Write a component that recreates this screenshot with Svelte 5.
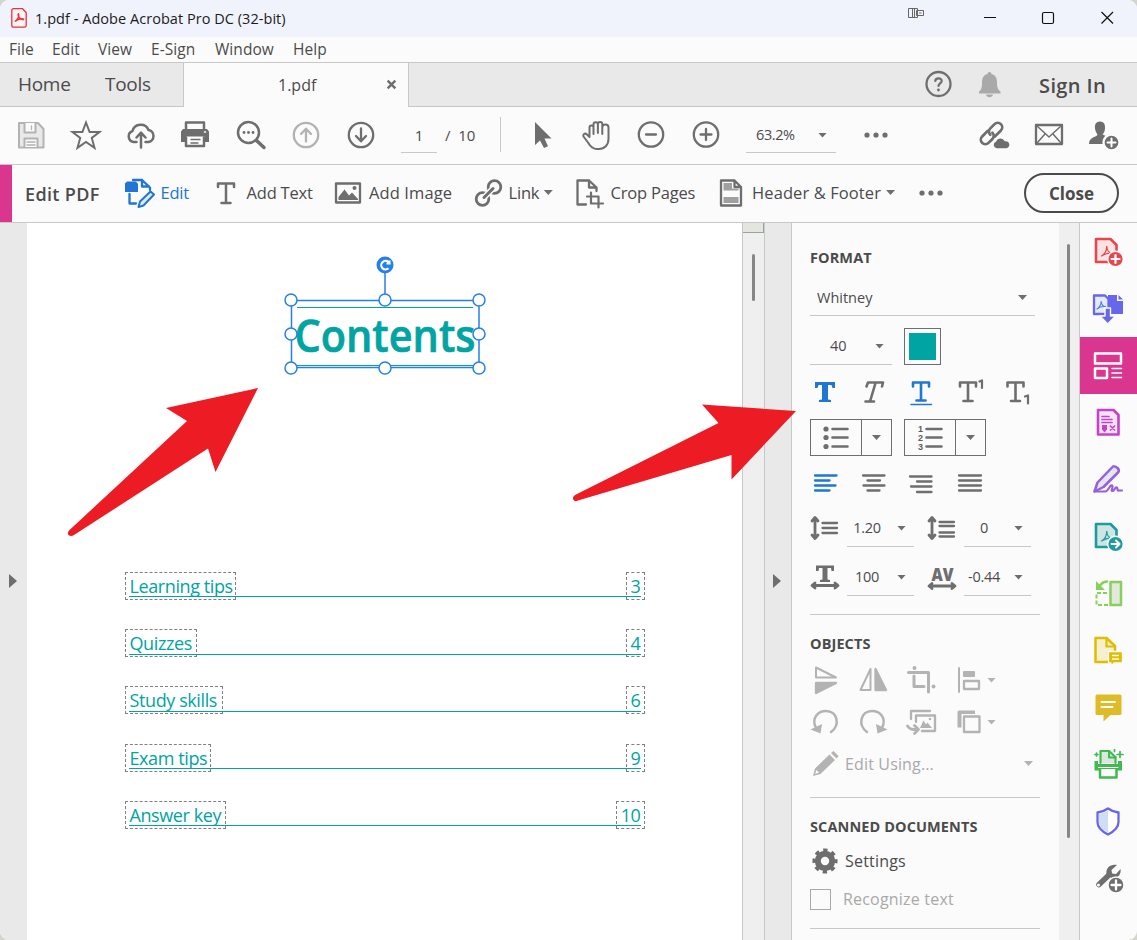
<script>
    const menus = ['File', 'Edit', 'View', 'E-Sign', 'Window', 'Help'];

    const contents = [
        { title: 'Learning tips', page: 3, width: 111 },
        { title: 'Quizzes', page: 4, width: 72 },
        { title: 'Study skills', page: 6, width: 98 },
        { title: 'Exam tips', page: 9, width: 86 },
        { title: 'Answer key', page: 10, width: 101 }
    ];

    const tools = [
        { icon: 'edit', label: 'Edit', active: true },
        { icon: 'addText', label: 'Add Text' },
        { icon: 'image', label: 'Add Image' },
        { icon: 'link', label: 'Link', menu: true },
        { icon: 'cropPage', label: 'Crop Pages' },
        { icon: 'header', label: 'Header & Footer', menu: true },
        { icon: 'dots' }
    ];

    const rail = [
        'create', 'combine', 'editPdf', 'forms', 'sign', 'exportPdf',
        'organize', 'send', 'comment', 'scan', 'protect', 'more'
    ];

    // All icons are drawn on a 32x32 grid, stroked with currentColor
    const pdfMark = '<path stroke-width="1.300" d="M9.500 20c3-1.500 5-5 5.300-9.500c.2 4 2.500 6.800 5.700 6.700c-4-.6-7.500.5-11 2.800z"/>';

    const icons = {
        save: '<g stroke-width="2"><path fill="#e9e9e9" d="M4 4H23L28.500 10V28.500H4Z"/><path fill="#fbfbfb" d="M9.500 4V13.500H20.500V4M9.500 28V19.500H22.500V28"/><path d="M16.500 7V10.500M12 23H20M12 26H20" stroke-width="1.300"/></g>',
        star: '<path stroke-width="2" stroke-linejoin="miter" d="M16 3.500L19.600 13H29.500L21.800 19L24.500 28.800L16 23L7.500 28.800L10.200 19L2.500 13H12.400Z"/>',
        cloud: '<path stroke-width="2.500" d="M11.500 23H8.500A5.700 5.700 0 0 1 7.500 12A8.500 8.500 0 0 1 23.500 11A6.100 6.100 0 0 1 23.500 23H20.500M16 28.500V14M11.500 18.500L16 13.700L20.500 18.500"/>',
        print: '<g transform="translate(-2 -.5)"><path stroke-width="2.500" d="M8 12V4H26V12"/><path fill="currentColor" stroke="none" d="M5 10.500H29L31 13V23.500H27V18H8V23.500H3V13Z"/><path stroke-width="2.500" d="M8 19V27.500H26V19" fill="#fff"/><path stroke-width="1.300" d="M13 21H22M13 24.500H20"/><path stroke="#fff" stroke-width="1.500" d="M26.500 13.500H27.500"/></g>',
        find: '<circle cx="13.500" cy="13.500" r="10.500" stroke-width="2.500"/><path stroke-width="3.500" d="M21.500 21.500L29 28.500"/><g fill="currentColor" stroke="none"><circle cx="9" cy="13.500" r="1.400"/><circle cx="13.500" cy="13.500" r="1.400"/><circle cx="18" cy="13.500" r="1.400"/></g>',
        up: '<circle cx="16" cy="16" r="12.200"/><path d="M16 22.500V10M11 15L16 9.700L21 15"/>',
        down: '<circle cx="16" cy="16" r="12.200"/><path d="M16 9.500V22M11 17L16 22.300L21 17"/>',
        pointer: '<path fill="currentColor" stroke="none" d="M9 3V26L14 21.500L18 29L22 27.200L18.500 19.500H25.500Z"/>',
        hand: '<path stroke-width="2" d="M8.500 18V8.500a2 2 0 0 1 4 0V15V5.500a2.200 2.200 0 0 1 4.400 0V14V5.200a2.200 2.200 0 0 1 4.400 0V15V8.500a3 3 0 0 1 6.200 0V20c0 6-4 10-9.500 10h-2c-4 0-7-3-9-6.500L2.500 17.500c-1-2.200 1.500-3.700 3.200-2.200L8.500 18"/>',
        minus: '<circle cx="15" cy="15.500" r="12.200"/><path d="M10 15.500H20"/>',
        plus: '<circle cx="15" cy="15.500" r="12.200"/><path d="M9.500 15.500H20.500M15 10V21"/>',
        dots: '<g fill="currentColor" stroke="none"><circle cx="7" cy="16" r="2.600"/><circle cx="16" cy="16" r="2.600"/><circle cx="25" cy="16" r="2.600"/></g>',
        share: '<g transform="rotate(-45 13 15)" stroke-width="2.700"><path d="M13 10.500H5A4.500 4.500 0 0 0 5 19.500H10.500A4.500 4.500 0 0 0 15 15M14 19.500H22.500A4.500 4.500 0 0 0 22.500 10.500H16.500A4.500 4.500 0 0 0 12 15"/></g><path fill="currentColor" stroke="#fbfbfb" stroke-width="1.500" d="M18.500 30A4.200 4.200 0 0 1 17.500 22A5.200 5.200 0 0 1 27 21.500A4.300 4.300 0 0 1 28.500 30Z"/>',
        mail: '<path d="M3 6H29V25H3Z"/><path stroke-width="1.500" d="M4 7L16 18L28 7M4 24L12 15M28 24L20 15"/>',
        addUser: '<g fill="currentColor" stroke="none"><path d="M12 2.500C8 2.500 6.500 5.500 7 9.500C7.300 12 8.500 14 9.500 15.500C9 18.500 1 17.500 1 25H17L19 17.500L14.500 15.500C16 14 16.800 12 17 9.500C17.300 5.500 16 2.500 12 2.500Z"/><circle cx="23.500" cy="23.500" r="8" stroke="#fbfbfb"/></g><path stroke="#fff" stroke-width="2" d="M19.500 23.500H27.500M23.500 19.500V27.500"/>',
        help: '<circle cx="15.500" cy="15" r="12" stroke-width="2.300"/><path d="M12.300 12C12.500 8.300 18.800 8.500 18.700 12C18.500 14.500 15.500 14.300 15.500 17" stroke-width="2.200"/><circle cx="15.500" cy="21" r="1.400" fill="currentColor" stroke="none"/>',
        bell: '<path fill="currentColor" stroke="none" d="M15.500 3C16.800 3 17.500 4 17.500 5C21.500 6 23 9 23 13.500C23 19.500 24.500 21 26.500 22.500V24.500H5V22.500C7 21 8 19.500 8 13.500C8 9 9.500 6 13.500 5C13.500 4 14.200 3 15.500 3ZM12 25.500H19C18.500 29 12.500 29 12 25.500Z"/>',
        edit: '<g stroke-width="2.300"><path d="M5.500 17V26.500H12M9 3H18L26 10.500V13M18 3V9.500H25"/><path fill="currentColor" stroke="none" d="M1 6.500L3 4.500H12L14 7V15H1Z"/><path stroke-width="2" fill="#dce9f7" d="M14.500 30L16 24.500L26.500 14.500L30 17.500L19.500 28.500Z"/></g>',
        addText: '<g stroke-width="2.500"><path d="M8 10V6.500H24V10M16 7V26M11.500 26H20.500"/></g>',
        image: '<path d="M4 6.500H28V25.500H4Z"/><path fill="currentColor" stroke="none" d="M6.500 23V20L12.500 12.500L17 18.500L20 15.500L26 22V23Z"/><circle cx="22.500" cy="11" r="2" fill="currentColor" stroke="none"/>',
        link: '<circle cx="22.500" cy="10" r="6.300" stroke-width="2.800"/><circle cx="10.500" cy="22" r="6.300" stroke-width="2.800"/><path stroke="#fbfbfb" stroke-width="6" d="M13.500 19L19.500 13"/><path stroke-width="3" d="M12 20.500L21 11.500"/>',
        cropPage: '<path d="M12 27.500H3.500V3.500H15L22.500 10.500V14M15 3.500V10.500H22.500"/><path stroke-width="2.200" d="M13 19.500H24.500V30.500M17 15.500V26.500H29"/>',
        header: '<path d="M6 3.500H19.500L26 10V28.500H6Z M19.500 3.500V10H26"/><path fill="#a0a0a0" stroke="none" d="M8.500 6H17V11.500H23.500V13.500H8.500ZM8.500 20H23.500V26H8.500Z"/>',
        bold: '<path fill="currentColor" stroke="none" d="M6 6H26V12H23.500L22.500 9H19V23.500L22 24V26H10V24L13 23.500V9H9.500L8.500 12H6Z"/>',
        italic: '<path d="M8.500 10.500L10 6.500H25L24 10.500M17.500 7L12 25.500M7.500 25.500H16" stroke-width="2.600"/>',
        underline: '<path stroke-width="2.600" d="M7 10.500V6.500H23V10.500M15 7V24.500M10.500 24.500H19.500"/><path stroke-width="1.500" d="M5 28.500H25.500"/>',
        superscript: '<path stroke-width="2.600" d="M5 10.500V6.500H21V10.500M13 7V25M8.500 25H17.500"/><path stroke-width="2.200" d="M24.500 5.500L27 4.500V12"/>',
        subscript: '<path stroke-width="2.600" d="M4.500 10.500V6.500H20.500V10.500M12.500 7V25M8 25H17"/><path stroke-width="2.200" d="M22 20.500L25 19.500V27.500"/>',
        bullets: '<g fill="currentColor" stroke="none"><circle cx="6" cy="7" r="2.600"/><circle cx="6" cy="15.500" r="2.600"/><circle cx="6" cy="24.500" r="2.600"/></g><path stroke-width="2.600" d="M12.500 7H27.500M12.500 15.500H27.500M12.500 24.500H27.500"/>',
        alignLeft: '<path d="M6 7.500H27.500M6 12.500H20.500M6 17.500H26.500M6 22.500H20.500"/>',
        alignCenter: '<path d="M6 7.500H27.500M10.500 12.500H23M6.500 17.500H27.500M10.500 22.500H22.500"/>',
        alignRight: '<path d="M5 8.500H26.500M12 13.500H26.500M6 18.500H26.500M12 24H26.500"/>',
        justify: '<path d="M6 7.500H28M6 12.500H28M6 17.500H28M6 22.500H28"/>',
        lineSpacing: '<path stroke-width="2.800" d="M7 6V24M4 8L7 4.500L10 8M4 22L7 25.500L10 22"/><path d="M14.500 10H29M14.500 15H29M14.500 20H29"/>',
        paraSpacing: '<path stroke-width="2.800" d="M7 6V24M4 8L7 4.500L10 8M4 22L7 25.500L10 22"/><path d="M14.500 9H29M14.500 13H29M14.500 19.500H29M14.500 23.500H29"/>',
        scaleText: '<path fill="currentColor" stroke="none" d="M8 3.500H26V9H23.500L23 6H19.500V17.500L22 18V20H12V18L14.500 17.500V6H11L10.500 9H8Z"/><path stroke-width="2.800" d="M5 23.500H29M7 21L4 23.500L7 26M27 21L30 23.500L27 26"/>',
        flipV: '<path stroke-width="2" d="M7 3.500V13.500H27Z"/><path fill="currentColor" d="M7 19H27L7 29Z"/>',
        flipH: '<path stroke-width="2" d="M13.500 5V26H3.500Z"/><path fill="currentColor" d="M18.500 5V26H29Z"/>',
        crop: '<path stroke-width="3" d="M3.500 8.500H23.500V28M9 12V22.500H19"/><circle cx="9.500" cy="4" r="2" fill="currentColor" stroke="none"/><circle cx="28.500" cy="22.500" r="2" fill="currentColor" stroke="none"/>',
        arrange: '<path stroke-width="2" d="M6 4V28"/><path stroke-width="2" fill="currentColor" d="M11 8H21V12H11Z"/><path d="M11 17H26V25H11Z"/>',
        rotateL: '<path stroke-width="2.500" d="M7 22C2 12 9 5 17 5C28.500 5 31.500 19 22 26"/><path fill="currentColor" stroke="none" d="M1.500 23.500L13 18L11.500 27.500Z"/>',
        rotateR: '<path stroke-width="2.500" d="M25 22C30 12 23 5 15 5C3.500 5 .5 19 10 26"/><path fill="currentColor" stroke="none" d="M30.500 23.500L19 18L20.500 27.500Z"/>',
        replace: '<path d="M6 13V5H25M11 9.500H30V25H17M11 9.500V16"/><path stroke-width="2.800" d="M2.500 20C5 23.500 7 23.500 12 23.500M9.500 19.500L13.500 23.500L9.500 27.500"/><path fill="currentColor" stroke="none" d="M15 22L18.500 14.500L21 18.500L22.500 16.500L27 22Z"/><circle cx="25" cy="13" r="1.300" fill="currentColor" stroke="none"/>',
        layers: '<path fill="currentColor" stroke="none" d="M4.500 6Q4.500 4.500 6 4.500H22V8H8.500V21.500H4.500Z"/><path d="M11 10.500H26.500V26H11Z"/>',
        pencil: '<path fill="currentColor" stroke="none" d="M4 28L6 20.500L20.500 6.500L26 12L11.500 26ZM22 5L24.500 3L29.500 8L27.500 10.500Z"/><path fill="#fbfbfb" stroke="none" d="M6 26L7.500 22L10 24.500Z"/>',
        gear: '<circle cx="16" cy="16" r="7.200" stroke-width="6"/><circle cx="16" cy="16" r="10.800" stroke-width="3.500" stroke-linecap="butt" stroke-dasharray="4.300 4.182" stroke-dashoffset="2.150"/>',
        create: `<path fill="#fbe3e1" stroke-width="2.600" d="M4 3H18.500L24.500 9V26H4Z"/>${pdfMark}<circle cx="23.500" cy="23" r="7.800" fill="currentColor" stroke="#fbfbfb" stroke-width="1.400"/><path stroke="#fff" stroke-width="2.200" d="M19.500 23H27.500M23.500 19V27"/>`,
        combine: '<path fill="#e6e9fb" d="M2 3.500H13L16.500 7V22H2Z"/><path stroke-width="1.200" stroke="#4a86d8" d="M5 17C8 15 9 12 9.200 9.500C9.500 12 11 14.500 13.500 14.500C10 14 7.500 15 5 17Z"/><path fill="currentColor" stroke="none" d="M16 3H25V9H31V22H16Z M26.500 3L31 7.500H26.500Z"/><path fill="currentColor" stroke="#fbfbfb" stroke-width="1.400" d="M13 16H18.500V24H23.500L15.700 32L8 24H13Z"/>',
        editPdf: '<path stroke-width="2.500" d="M3 4.500H29V14.500H3ZM3 19.500H15V29H3Z"/><path stroke-width="1.600" d="M20 19.500H29.500M20 24H29.500M20 28.500H29.500"/>',
        forms: '<path fill="#f5e4f5" stroke-width="2.600" d="M6 4H21.500L26.500 9V28.500H6Z"/><path stroke-width="1.700" d="M10 10.500H17M10 13.500H20M10 16.500H20M18.500 20L22.500 24M22.500 20L18.500 24"/><path fill="currentColor" stroke="none" d="M10 19H15V23.500L12.500 26.500L10 23.500Z"/>',
        sign: '<path fill="#e2e6f5" stroke-width="2.500" d="M2.500 28.500L5.500 19.500L20 4.500Q22 2 25.500 5Q28 7.500 26 9.500L11.500 24Z"/><path stroke-width="2.200" d="M2.500 28.500H13C17 28 18 21 20 22.500C22 24 18 28 20.500 28C23 28 22.500 23.500 25 24.500C26 26 25 28 27 27.500L30 27.500"/>',
        exportPdf: `<path fill="#cfe5e3" stroke-width="2.600" d="M4 3H18.500L24.500 9V26H4Z"/>${pdfMark}<circle cx="23.500" cy="23" r="7.800" fill="currentColor" stroke="#fbfbfb" stroke-width="1.400"/><path stroke="#fff" stroke-width="2" d="M19.500 23H27M24 19.500L27.500 23L24 26.500"/>`,
        organize: '<path fill="#e2e8dc" stroke-width="2.500" d="M18.500 5H29V28H18.500Z"/><path stroke-width="2" stroke-linecap="butt" stroke-dasharray="4 2" d="M15 16H4.500V28H16.500"/><path d="M15 4.500C11 5 10 6 7 9.500" stroke-width="2.500"/><path fill="currentColor" stroke="none" d="M4 4V13H13Z"/>',
        send: '<path fill="#f8efce" stroke-width="2.500" d="M3.500 4H14.500L23 12V28H3.500Z"/><path stroke-width="2.200" d="M14.500 4V12.500H23"/><path fill="currentColor" stroke="#fbfbfb" stroke-width="1.300" d="M16.500 17.500H30.500V29H22L19 32.500V29H16.500Z"/><path stroke="#fff" stroke-width="1.300" d="M20.500 21.500H26.500M20.500 25H26.500"/>',
        comment: '<path fill="#dfbb27" stroke="none" d="M5 3.500H28Q29.500 3.500 29.500 5V22.500Q29.500 24 28 24H18.500L11.500 30.500V24H5Q3.500 24 3.500 22.500V5Q3.500 3.500 5 3.500Z"/><path stroke="#fff" stroke-width="2" d="M9.500 11H23M9.500 16H20.500"/>',
        scan: '<path stroke-width="2.200" fill="#d9e8dc" d="M8.500 15V3H17L23.500 9V15"/><path stroke-width="2" d="M17 3V9.500H23.500"/><path fill="currentColor" stroke="none" d="M2.500 13H6V16H26V13H30V22.500H2.500Z"/><path stroke="#fbfbfb" stroke-width="1.200" d="M6.500 19.500H26"/><path fill="#fbfbfb" stroke-width="2.500" stroke-linecap="butt" d="M8 21V29.500H24.500V21"/><path stroke-width="1.700" d="M28 3.500V9.500M25 6.500H31M4.500 5V8M3 6.500H6M22.500 1.500V3.500"/>',
        protect: '<path fill="#fff" stroke-width="2.300" d="M16 3.500C20 6.500 23 7 26.500 7.500V17C26.500 23 21 27 16 29.500C11 27 5.500 23 5.500 17V7.500C9 7 12 6.500 16 3.500Z"/><path fill="#cfddf5" stroke="none" d="M16 5.500V27.500C11 25 7 22 7 17V9C10 8.500 12.500 8 16 5.500Z"/>',
        more: '<path stroke-width="5.500" d="M7 22.500L17.500 12.500"/><path fill="currentColor" stroke="none" d="M25 3L19.500 8L20 11.500L24 12L28.500 7C29.500 12 26 17 20 16.500L14.500 12C13.500 5.500 19 1.500 25 3Z"/><circle cx="6.500" cy="23" r="1.500" fill="#fbfbfb" stroke="none"/><circle cx="24" cy="23" r="8" fill="currentColor" stroke="#fbfbfb" stroke-width="1.500"/><path stroke="#fff" d="M19.500 23H28.500M24 18.500V27.500"/>'
    };
</script>

{#snippet icon(name, tone = '')}
    <svg class="icon {tone}" viewBox="0 0 32 32" aria-hidden="true">{@html icons[name]}</svg>
{/snippet}

{#snippet select(value, kind = '')}
    <div class="select {kind}">
        <span>{value}</span>
        <i class="caret"></i>
    </div>
{/snippet}

<div class="window">
    <header class="titlebar">
        <svg class="logo" viewBox="0 0 16 20">
            <path d="M2.500 .7H11.500L15.200 4.500V17.500Q15.200 19.200 13.500 19.200H2.500Q.8 19.200 .8 17.500V2.500Q.8 .7 2.500 .7Z" fill="#fff3f3" stroke="#e8323c" stroke-width="1.300" />
            <path d="M4 13.500C7 11 8.200 8.500 7.600 6C7 5 6.500 7.500 8.500 9.800C10 11.500 13 12.300 12.500 11C11 10 6.500 11.200 4 13.500Z" fill="none" stroke="#e8323c" stroke-width="1.400" />
        </svg>
        <span class="title">1.pdf - Adobe Acrobat Pro DC (32-bit)</span>
        <svg class="display" viewBox="0 0 16 10">
            <path d="M.5 .5H9.500V9.500H.5ZM8.500 2.500H15.500V7.500H8.500Z" />
            <path d="M4.500 1V9M6.500 1V9M11 5H13.500" />
        </svg>
        <svg class="controls" viewBox="0 0 130 14">
            <path d="M0 6.500H12M117.500 1L129 12.500M129 1L117.500 12.500" />
            <rect x="58.500" y="1.500" width="11" height="11" rx="1.500" />
        </svg>
    </header>

    <nav class="menubar">
        {#each menus as menu}
            <span>{menu}</span>
        {/each}
    </nav>

    <div class="tabs">
        <div class="tab-group">
            <span>Home</span>
            <span>Tools</span>
        </div>
        <div class="tab">
            <span>1.pdf</span>
            <svg viewBox="0 0 10 10"><path d="M1.500 1.500L8.500 8.500M8.500 1.500L1.500 8.500" /></svg>
        </div>
        <div class="tab-rest">
            {@render icon('help')}
            {@render icon('bell', 'pale')}
            <span>Sign In</span>
        </div>
    </div>

    <div class="toolbar">
        <div class="cells">
            {@render icon('save', 'muted')}
            {@render icon('star')}
            {@render icon('cloud')}
            {@render icon('print')}
            {@render icon('find')}
            {@render icon('up', 'muted')}
            {@render icon('down')}
        </div>
        <div class="page-input">1</div>
        <span class="page-count">/&nbsp; 10</span>
        <div class="divider"></div>
        <div class="cells">
            {@render icon('pointer')}
            {@render icon('hand')}
            {@render icon('minus')}
            {@render icon('plus')}
        </div>
        {@render select('63.2%', 'zoom')}
        <div class="overflow">{@render icon('dots')}</div>
        <div class="cells share">
            {@render icon('share')}
            {@render icon('mail')}
            {@render icon('addUser')}
        </div>
    </div>

    <div class="editbar">
        <div class="stripe"></div>
        <strong>Edit PDF</strong>
        <div class="tools">
            {#each tools as tool}
                <div class="tool" class:active={tool.active}>
                    {@render icon(tool.icon)}
                    {#if tool.label}<span>{tool.label}</span>{/if}
                    {#if tool.menu}<i class="caret"></i>{/if}
                </div>
            {/each}
        </div>
        <button>Close</button>
    </div>

    <main>
        <div class="gutter"><i class="expand"></i></div>

        <section class="page">
            <svg class="heading" viewBox="0 0 210 130">
                <path class="rule" d="M20 56.500H196M20 114.500H196" />
                <text x="17.500" y="100.500" textLength="181" lengthAdjust="spacingAndGlyphs">Contents</text>
                <path class="frame" d="M108 22V49M14.500 49.500H202V116.500H14.500Z" />
                {#each [[14, 49], [108, 49], [202, 49], [14, 83], [202, 83], [14, 117], [108, 117], [202, 117]] as [cx, cy]}
                    <circle {cx} {cy} r="6" />
                {/each}
                <circle class="rotate" cx="108" cy="14" r="8.500" />
                <path class="turn" d="M111.500 11A4.300 4.300 0 1 0 111.500 17.300M112.500 9.500V12.500H109.500" />
            </svg>

            <div class="toc">
                {#each contents as row}
                    <div class="entry">
                        <span class="box" style="width: {row.width}px">{row.title}</span>
                        <span class="box number">{row.page}</span>
                    </div>
                {/each}
            </div>
        </section>

        <div class="scroll"><div class="split"></div><div class="thumb"></div></div>
        <div class="gutter right"><i class="expand"></i></div>

        <aside class="panel">
            <h2>FORMAT</h2>
            {@render select('Whitney', 'font')}
            <div class="row size-row">
                {@render select('40', 'size')}
                <div class="swatch"><div></div></div>
            </div>
            <div class="row styles">
                {@render icon('bold', 'blue')}
                {@render icon('italic')}
                {@render icon('underline', 'blue')}
                {@render icon('superscript')}
                {@render icon('subscript')}
            </div>
            <div class="row lists">
                <div class="split-button">
                    <div>{@render icon('bullets')}</div>
                    <div><i class="caret"></i></div>
                </div>
                <div class="split-button">
                    <div>
                        <svg class="icon" viewBox="0 0 32 32">
                            <path stroke-width="2.600" d="M12.500 7H27.500M12.500 15.500H27.500M12.500 24.500H27.500" />
                            <text x="4" y="9.500">1</text>
                            <text x="4" y="18.500">2</text>
                            <text x="4" y="27.500">3</text>
                        </svg>
                    </div>
                    <div><i class="caret"></i></div>
                </div>
            </div>
            <div class="row aligns">
                {@render icon('alignLeft', 'blue')}
                {@render icon('alignCenter')}
                {@render icon('alignRight')}
                {@render icon('justify')}
            </div>
            <div class="row metrics">
                {@render icon('lineSpacing')}
                {@render select('1.20', 'metric')}
                {@render icon('paraSpacing')}
                {@render select('0', 'metric')}
            </div>
            <div class="row metrics lower">
                {@render icon('scaleText')}
                {@render select('100', 'metric')}
                <svg class="icon" viewBox="0 0 32 32">
                    <text class="kern" x="6.500" y="19" textLength="22" lengthAdjust="spacingAndGlyphs">AV</text>
                    <path stroke-width="2.800" d="M5 24H29M7 21.500L4 24L7 26.500M27 21.500L30 24L27 26.500" />
                </svg>
                {@render select('-0.44', 'metric')}
            </div>
            <hr />

            <h2 class="sub">OBJECTS</h2>
            <div class="row objects">
                {@render icon('flipV')}
                {@render icon('flipH')}
                {@render icon('crop')}
                {@render icon('arrange')}
                <i class="caret"></i>
            </div>
            <div class="row objects">
                {@render icon('rotateL')}
                {@render icon('rotateR')}
                {@render icon('replace')}
                {@render icon('layers')}
                <i class="caret"></i>
            </div>
            <div class="row using">
                {@render icon('pencil')}
                <span>Edit Using...</span>
                <i class="caret"></i>
            </div>
            <hr class="second" />

            <h2 class="sub">SCANNED DOCUMENTS</h2>
            <div class="row settings">
                {@render icon('gear')}
                <span>Settings</span>
            </div>
            <div class="row recognize">
                <div class="checkbox"></div>
                <span>Recognize text</span>
            </div>
            <hr class="third" />
        </aside>

        <div class="panel-scroll"><div></div></div>

        <nav class="rail">
            {#each rail as name}
                <div class="rail-item {name}">{@render icon(name)}</div>
            {/each}
        </nav>
    </main>

    <svg class="arrows" viewBox="0 0 1137 940">
        <path d="M258 388L166 408L187 421L69 530.500Q67 533 68.500 535Q71 537 74 535L208 448.500L215.500 472Z" />
        <path d="M796 411L702 404.500L718.500 423L575 495Q572 497 573.500 500Q575 502 578 500.500L731.500 455V479.500Z" />
    </svg>
</div>

<style>
    :global(body) {
        background: #d5d5cf;
    }

    .window {
        position: relative;
        width: 1137px;
        height: 940px;
        overflow: hidden;
        border-radius: 9px;
        background: #fbfbfb;
        color: #4b4b4b;
        font-family: "Open Sans", "Noto Sans", sans-serif;
        font-size: 16px;
        line-height: 20px;
    }

    .window * {
        box-sizing: border-box;
    }

    .icon {
        flex: none;
        width: 32px;
        height: 32px;
        overflow: visible;
        fill: none;
        stroke: currentColor;
        stroke-width: 2.3;
        stroke-linecap: round;
        stroke-linejoin: round;
        color: #6e6e6e;
    }

    .icon.muted,
    .objects .icon,
    .using .icon {
        color: #b3b3b3;
    }

    .icon.pale {
        color: #a9a9a9;
    }

    .icon.blue {
        color: #2076d2;
    }

    .icon text {
        fill: #5e5e5e;
        stroke: none;
        font-family: "Liberation Sans", sans-serif;
        font-size: 9px;
        font-weight: 700;
    }

    .icon text.kern {
        fill: #6e6e6e;
        font-family: "Open Sans", sans-serif;
        font-size: 17px;
        font-weight: 800;
    }

    .caret {
        flex: none;
        width: 9px;
        height: 5px;
        background: #6e6e6e;
        clip-path: polygon(0 0, 100% 0, 50% 100%);
    }

    .titlebar {
        display: flex;
        align-items: flex-start;
        height: 37px;
        padding-left: 11px;
        background: #f0f3fb;
        color: #1c1c1c;
    }

    .logo {
        width: 16px;
        height: 20px;
        margin-top: 8px;
    }

    .title {
        width: 873px;
        margin: 9px 0 0 8px;
        font-size: 14.5px;
        letter-spacing: 0.04px;
    }

    .display {
        width: 16px;
        height: 10px;
        margin-top: 8px;
        fill: none;
        stroke: #666;
        stroke-width: 1;
    }

    .controls {
        width: 130px;
        height: 14px;
        margin: 11px 0 0 60px;
        fill: none;
        stroke: #111;
        stroke-width: 1.2;
    }

    .menubar {
        display: grid;
        grid-template-columns: 43px 46px 53px 64px 78px 60px;
        align-items: center;
        height: 26px;
        padding: 0 0 2px 9px;
        border-bottom: 1px solid #c8c8c8;
        font-size: 15.5px;
        letter-spacing: 0.05px;
    }

    .tabs {
        display: flex;
        height: 44px;
    }

    .tab-group,
    .tab-rest {
        display: flex;
        align-items: center;
        border-bottom: 1px solid #c8c8c8;
        background: #e9e9e9;
        font-size: 19px;
    }

    .tab-group {
        width: 184px;
        padding: 0 0 2px 18px;
        border-right: 1px solid #c8c8c8;
        letter-spacing: -0.3px;
    }

    .tab-group span {
        flex: none;
        width: 87px;
    }

    .tab-group span + span {
        width: 60px;
    }

    .tab {
        display: flex;
        align-items: center;
        width: 224px;
        padding: 0 0 1px 94px;
        font-size: 16px;
    }

    .tab span {
        width: 108px;
    }

    .tab svg {
        width: 11px;
        height: 11px;
        stroke: #6e6e6e;
        stroke-width: 2.2;
    }

    .tab-rest {
        flex: 1;
        padding-left: 514px;
        border-left: 1px solid #c8c8c8;
    }

    .tab-rest .icon + .icon {
        margin-left: 19px;
    }

    .tab-rest span {
        margin: 2px 0 0 33px;
        font-size: 20px;
        font-weight: 600;
        letter-spacing: 0.4px;
    }

    .toolbar {
        display: flex;
        align-items: center;
        height: 58px;
        padding: 0 0 2px 3px;
        border-bottom: 1px solid #c8c8c8;
        font-size: 15px;
    }

    .cells {
        display: grid;
        grid-auto-flow: column;
        grid-auto-columns: 55px;
        justify-items: center;
    }

    .page-input {
        width: 36px;
        height: 37px;
        margin-left: 13px;
        padding-top: 9px;
        border-bottom: 1px solid #c8c8c8;
        text-align: center;
    }

    .page-count {
        width: 55px;
        margin-left: 8px;
    }

    .divider {
        width: 1px;
        height: 35px;
        margin-right: 13px;
        background: #c8c8c8;
    }

    .select {
        display: flex;
        align-items: center;
        height: 37px;
        border-bottom: 1px solid #c8c8c8;
        font-size: 14.5px;
    }

    .select.zoom {
        width: 90px;
        margin: 0 24px 0 12px;
        padding: 2px 0 0 10px;
    }

    .select.zoom span {
        width: 62px;
        letter-spacing: -0.4px;
    }

    .overflow {
        display: flex;
        width: 106px;
    }

    .editbar {
        display: flex;
        align-items: center;
        height: 58px;
        border-bottom: 1px solid #c8c8c8;
    }

    .stripe {
        width: 12px;
        height: 57px;
        background: #da358f;
    }

    .editbar strong {
        width: 112px;
        padding: 0 0 0 13px;
        font-size: 18px;
        font-weight: 600;
        letter-spacing: 0.35px;
    }

    .tools {
        display: grid;
        grid-template-columns: 86px 122px 140px 102px 141px 200px 109px;
        margin-bottom: 2px;
    }

    .tool {
        display: flex;
        align-items: center;
        gap: 4.5px;
        font-size: 16.5px;
        letter-spacing: -0.2px;
        white-space: nowrap;
    }

    .tool:nth-child(3),
    .tool:nth-child(6) {
        gap: 5px;
        letter-spacing: 0.1px;
    }

    .tool.active,
    .tool.active .icon {
        color: #2076d2;
    }

    button {
        width: 95px;
        height: 40px;
        margin-bottom: 1px;
        border: 2px solid #4b4b4b;
        border-radius: 20px;
        background: #fbfbfb;
        color: #4b4b4b;
        font: 700 17px "Open Sans", sans-serif;
    }

    main {
        display: flex;
        height: 717px;
    }

    .gutter {
        width: 27px;
        padding: 351px 0 0 9px;
        background: #e9e9e9;
    }

    .gutter.right {
        width: 28px;
        padding-left: 8px;
        border: solid #c8c8c8;
        border-width: 0 1px;
    }

    .expand {
        display: block;
        width: 8px;
        height: 14px;
        background: #6e6e6e;
        clip-path: polygon(0 0, 100% 50%, 0 100%);
    }

    .page {
        width: 715px;
        padding: 28px 97px 0 98px;
        background: #fff;
        color: #00a4a2;
    }

    .heading {
        display: block;
        width: 210px;
        height: 130px;
        margin-left: 152px;
        overflow: visible;
        fill: #fff;
        stroke: #2680eb;
        stroke-width: 1.5;
    }

    .heading text {
        fill: #00a4a2;
        stroke: #00a4a2;
        stroke-width: 0.7;
        font-size: 46px;
        font-weight: 600;
    }

    .heading .rule {
        stroke: #00a4a2;
        stroke-width: 1;
    }

    .heading .frame,
    .heading .turn {
        fill: none;
    }

    .heading .rotate {
        fill: #2680eb;
        stroke: none;
    }

    .heading .turn {
        stroke: #fff;
        stroke-width: 2.2;
    }

    .toc {
        display: flex;
        flex-direction: column;
        gap: 29.2px;
        margin-top: 191px;
        font-size: 18px;
    }

    .entry {
        position: relative;
        display: flex;
        justify-content: space-between;
        height: 28px;
    }

    .entry::after {
        content: "";
        position: absolute;
        top: 24.4px;
        left: 4px;
        width: 512px;
        height: 1px;
        background: #00a4a2;
    }

    .box {
        height: 28px;
        padding: 3px 0 0 3.5px;
        border: 1px dashed #808080;
        letter-spacing: -0.4px;
        white-space: nowrap;
    }

    .number {
        padding-right: 3.5px;
    }

    .scroll {
        width: 22px;
        border-left: 1px solid #c8c8c8;
        background: #efefef;
    }

    .split {
        height: 10px;
        border: solid #a0a0a0;
        border-width: 0 1px 1px 0;
        background: #e3e6de;
    }

    .scroll .thumb {
        width: 3px;
        height: 47px;
        margin: 21px 0 0 9px;
        border-radius: 2px;
        background: #868686;
    }

    .panel {
        width: 267px;
        padding: 15px 19px 0 18px;
    }

    h2 {
        display: flex;
        align-items: center;
        height: 38px;
        margin: 0;
        padding-top: 1px;
        font-size: 14.5px;
        font-weight: 700;
        letter-spacing: 0.1px;
        white-space: nowrap;
    }

    h2.sub {
        height: 44px;
        padding-top: 13px;
    }

    .row {
        display: flex;
        align-items: center;
    }

    .select.font {
        width: 225px;
        height: 40px;
        padding: 4px 0 0 7px;
    }

    .select.font span {
        width: 201px;
    }

    .size-row {
        height: 61px;
        gap: 12px;
    }

    .select.size {
        width: 82px;
        padding-left: 20px;
    }

    .select.size span {
        width: 45px;
    }

    .swatch {
        width: 37px;
        height: 37px;
        padding: 4px;
        border: 1px solid #6e6e6e;
    }

    .swatch div {
        height: 27px;
        background: #00a4a2;
    }

    .styles {
        height: 32px;
        gap: 16.5px;
        margin-left: -1px;
        padding-bottom: 2px;
    }

    .lists {
        height: 57px;
        gap: 12px;
    }

    .split-button {
        display: grid;
        grid-template-columns: 50px 30px;
        height: 37px;
        border: 1px solid #6e6e6e;
    }

    .split-button div {
        display: grid;
        place-items: center;
    }

    .split-button div + div {
        border-left: 1px solid #6e6e6e;
    }

    .aligns {
        height: 36px;
        gap: 16px;
        margin-left: -1px;
    }

    .metrics {
        height: 53px;
        margin-left: -2px;
    }

    .metrics.lower {
        height: 45px;
    }

    .select.metric {
        width: 67px;
        margin-left: 7px;
    }

    .select.metric span {
        width: 40px;
        margin-right: 10px;
        text-align: center;
        letter-spacing: -0.3px;
    }

    .select.metric + .icon {
        margin-left: 11px;
    }

    hr {
        width: 230px;
        height: 15px;
        margin: 0;
        border: 0;
        border-bottom: 1px solid #c8c8c8;
    }

    hr.second {
        height: 14px;
    }

    hr.third {
        height: 11px;
    }

    .objects {
        height: 42px;
        gap: 16px;
        margin-left: -1px;
    }

    .objects .caret {
        margin-left: -14px;
        background: #b3b3b3;
    }

    .using,
    .settings {
        height: 41px;
        gap: 4px;
        margin-left: -1px;
    }

    .using {
        color: #a9a9a9;
    }

    .using span {
        width: 175px;
        letter-spacing: 0.15px;
    }

    .using .caret {
        background: #b3b3b3;
    }

    .settings,
    .recognize {
        height: 38px;
        letter-spacing: 0.2px;
    }

    .recognize {
        gap: 12px;
        color: #a9a9a9;
    }

    .checkbox {
        width: 21px;
        height: 21px;
        border: 1px solid #a9a9a9;
    }

    .panel-scroll {
        width: 20px;
        padding: 21px 0 0 8px;
        background: #efefef;
    }

    .panel-scroll div {
        width: 3px;
        height: 594px;
        border-radius: 2px;
        background: #868686;
    }

    .rail {
        width: 58px;
        border-left: 1px solid #c8c8c8;
    }

    .rail-item {
        display: grid;
        place-items: center;
        height: 57px;
        padding: 0 2px 2px 0;
    }

    .rail-item.create,
    .rail-item.exportPdf {
        padding: 0 1px 0 0;
    }

    .rail-item.editPdf {
        background: #da358f;
    }

    .create .icon { color: #e8464f; }
    .combine .icon { color: #6767ec; }
    .editPdf .icon { color: #fff; }
    .forms .icon { color: #c443ca; }
    .sign .icon { color: #9860d8; }
    .exportPdf .icon { color: #1e9aa0; }
    .organize .icon { color: #88d05c; }
    .send .icon { color: #dfbd00; }
    .scan .icon { color: #3fb950; }
    .protect .icon { color: #6767ec; }

    .arrows {
        position: absolute;
        inset: 0;
        fill: #ed1c24;
        pointer-events: none;
    }
</style>
